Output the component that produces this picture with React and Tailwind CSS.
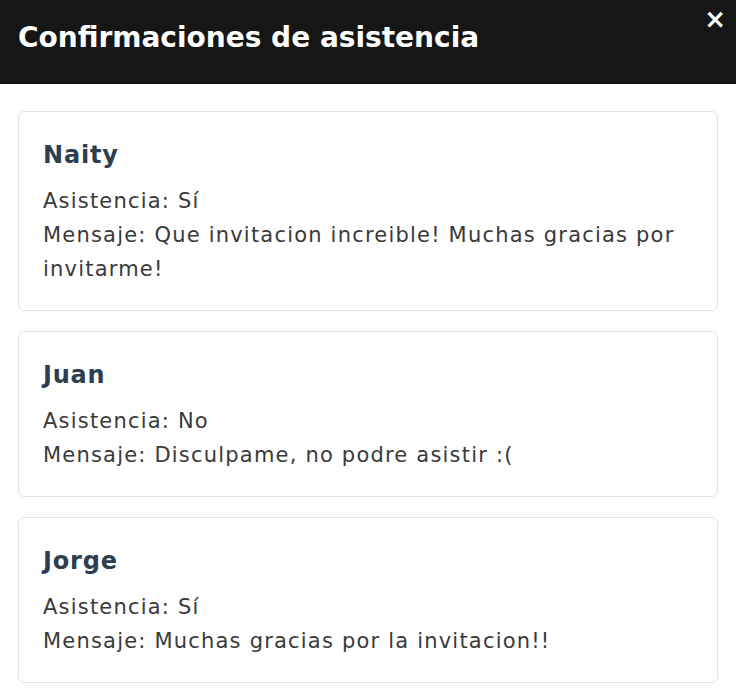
const rsvps = [
  { name: "Naity", asistencia: "Sí", mensaje: "Que invitacion increible! Muchas gracias por invitarme!" },
  { name: "Juan", asistencia: "No", mensaje: "Disculpame, no podre asistir :(" },
  { name: "Jorge", asistencia: "Sí", mensaje: "Muchas gracias por la invitacion!!" },
];

export default function App() {
  return (
    <div className="min-h-[700px] bg-white font-['DejaVu_Sans',sans-serif]">
      <div className="relative h-[84px] bg-[#161616] px-[18px] pt-[22px]">
        <h1 className="text-white font-bold text-[28px] leading-[32px]">Confirmaciones de asistencia</h1>
        <button className="absolute top-[6px] right-[10px] text-white font-bold text-[26px] leading-none">×</button>
      </div>
      <div className="px-[18px] pt-[27px] flex flex-col gap-[20px]">
        {rsvps.map((r, i) => (
          <div key={i} className="border border-[#e4e4e4] rounded-[6px] px-[24px] pt-[27px] pb-[24px]">
            <h2 className="text-[#2c3e50] font-bold text-[24px] leading-[32px] tracking-[0.8px] mb-[13px]">{r.name}</h2>
            <p className="text-[#3a3a3a] text-[21px] leading-[34px] tracking-[1.2px]">Asistencia: {r.asistencia}</p>
            <p className="text-[#3a3a3a] text-[21px] leading-[34px] tracking-[1.2px]">Mensaje: {r.mensaje}</p>
          </div>
        ))}
      </div>
    </div>
  );
}
